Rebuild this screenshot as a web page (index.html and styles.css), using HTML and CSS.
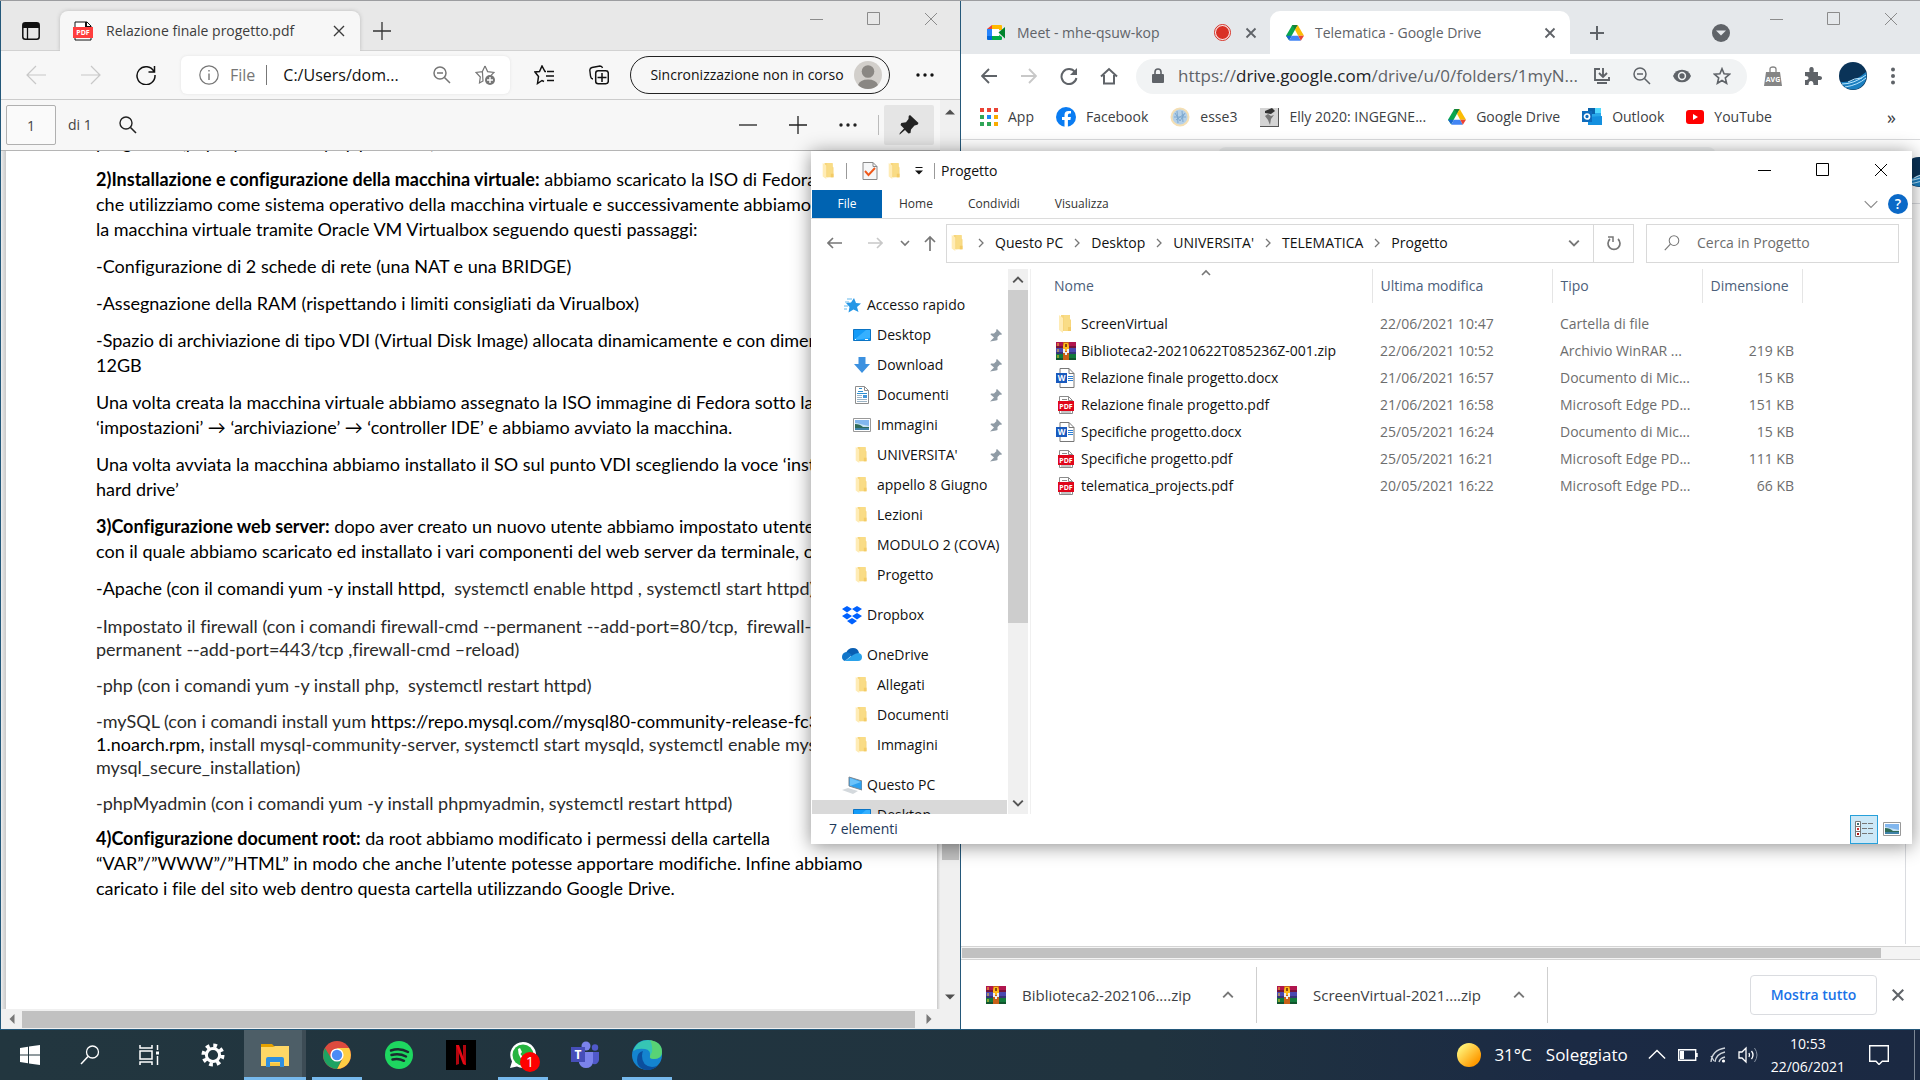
FILE: index.html
```html
<!DOCTYPE html>
<html lang="it">
<head>
<meta charset="utf-8">
<title>Desktop</title>
<link rel="stylesheet" href="styles.css">
</head>
<body>
<svg class="defs" aria-hidden="true">
  <symbol id="folder" viewBox="0 0 20 20"><path d="M5 1h9v4l1 1v11H5z" fill="#f7d67c"/><path d="M8 1h5l1 1v14l-6 1z" fill="#f9dc86"/><path d="M3 1l4 3v15l-4-3z" fill="#ffecb5"/><path d="M12 13h3v4h-3z" fill="#f3cb66"/></symbol>
  <symbol id="pdf" viewBox="0 0 20 20"><path d="M3.500 1.500h9l4 4v13h-13z" fill="#fff" stroke="#8b8b8b"/><path d="M12.500 1.500v4h4M6 4.500h5M15 17H5" fill="none" stroke="#8b8b8b"/><path d="M2 6h16v10H2z" fill="#e0061b"/><text x="10" y="14" text-anchor="middle" font-size="7" font-weight="700" fill="#fff">PDF</text></symbol>
  <symbol id="pdf-tab" viewBox="0 0 20 20"><path d="M2 1h12l4 4v14H2z" fill="#fff" stroke="#111"/><path d="M13 1v5h5" fill="none" stroke="#111" stroke-width="2"/><path d="M0 6h20v11H0z" fill="#ff3e3e"/><text x="10" y="14" text-anchor="middle" font-size="7" font-weight="700" fill="#fff">PDF</text></symbol>
  <symbol id="word" viewBox="0 0 20 20"><path d="M4 .5h9l5 5v14H4z" fill="#fff" stroke="#777"/><path d="M13 .5v5h5" fill="none" stroke="#777"/><path d="M12 8.500h5M12 10.500h5M12 12.500h5" stroke="#2b7cd3"/><path d="M0 5h11v10H0z" fill="#1859bd"/><text x="5.500" y="13" text-anchor="middle" font-size="8" font-weight="700" fill="#fff">W</text></symbol>
  <symbol id="rar" viewBox="0 0 20 20"><path d="M0 1h20v6H0z" fill="#b0154e"/><path d="M0 7h20v6H0z" fill="#4a49b0"/><path d="M0 13h20v6H0z" fill="#127a3c"/><path d="M0 5h20v2H0zM0 11h20v2H0zM0 17h20v2H0z" fill="#111" opacity=".35"/><path d="M2 2v3M2 8v3M2 14v3" stroke="#ffc928"/><path d="M7 1h6v18H7z" fill="#c86018"/><path d="M7 5l1-3h4l1 3v5H7z" fill="#ffb91c"/><path d="M9 3h2v3H9z" fill="#8a4a10"/><path d="M7 8h2v4H7zM11 8h2v4h-2zM9 11h2v3H9z" fill="#eee"/></symbol>
  <symbol id="pin" viewBox="0 0 14 14"><path d="M8 1l5 5-1 1-1-.5L8.500 9v3L7 12.500 1 13.500 1.500 13 5 9.500 1.500 6.500 2 5.500h3L7.500 3 7 2z" fill="#8f9ba5"/></symbol>
  <symbol id="desk" viewBox="0 0 18 18"><path d="M.5 3.500h17v11H.5z" fill="#139bf8" stroke="#0b74c4"/><path d="M1 14l12-10h4v8z" fill="#36b0ff"/><path d="M2 13.500h1M12 13.500h3" stroke="#fff"/></symbol>
  <symbol id="down" viewBox="0 0 18 18"><path d="M5.500 1h7v7H17l-8 9-8-9h4.500z" fill="#3c91e0"/></symbol>
  <symbol id="doc" viewBox="0 0 18 18"><path d="M2.500.5h9l4 4v13h-13z" fill="#fff" stroke="#8e8e8e"/><path d="M11.500.5v4h4" fill="none" stroke="#8e8e8e"/><path d="M6 2.500h3M5 5.500h5M4 7.500h10M10 9.500h4" stroke="#2e8fcf"/><path d="M4 9.500h5M4 11.500h5M4 13.500h10M4 15.500h10" stroke="#9bb3c4"/><path d="M10 9h4v3h-4z" fill="#4195d8"/></symbol>
  <symbol id="pic" viewBox="0 0 18 18"><path d="M.5 2.500h17v13H.5z" fill="#fff" stroke="#999"/><path d="M2 4h14v10H2z" fill="#82b7ee"/><path d="M2 7q3 0 5 1l9 2v4H2z" fill="#c7e2f4"/><path d="M2 8q5 0 8 3h6v1H2z" fill="#2f6b58"/><path d="M2 12h14v2H2z" fill="#3f82a8"/></symbol>
  <symbol id="quick" viewBox="0 0 20 20"><path d="M12 3l2 5 5 .5-4 3.500 1.500 5-5-2.500-5 3 1-5.500L4 8l5-.5z" fill="#2697e6"/><path d="M5 4h5M3 7h4M2 11h4M2 14h3" stroke="#67b9ec"/></symbol>
  <symbol id="dropbox" viewBox="0 0 20 20"><path d="M5 1l5 3-5 3.500L0 4zM15 1l5 3-5 3.500L10 4zM5 8l5 3-5 3.500L0 11zM15 8l5 3-5 3.500-5-3.500zM10 13l5 3-5 3.500L5 16z" fill="#0061fe"/></symbol>
  <symbol id="onedrive" viewBox="0 0 20 20"><path d="M4 8q2-5 7-5t6 5l-6 5z" fill="#0a5fb3"/><path d="M0 12q0-4 4-5 3 0 6 3l-7 6q-3-1-3-4z" fill="#1175c9"/><path d="M3 16l8-6q3-2 6-2 3 1 3 4 0 4-4 4z" fill="#2aa2ea"/></symbol>
  <symbol id="thispc" viewBox="0 0 20 20"><path d="M7 2l13 4v9L7 11z" fill="#2ea0ee" stroke="#7d8791"/><path d="M8 3l11 4-11 4z" fill="#6cc3fa"/><path d="M0 15l6-2 10 3-5 3z" fill="#d4d9dd"/></symbol>
  <symbol id="min" viewBox="0 0 14 14"><path d="M0 7.500h13" stroke="currentColor" fill="none"/></symbol>
  <symbol id="max" viewBox="0 0 14 14"><path d="M.5.5h12v12H.5z" stroke="currentColor" fill="none"/></symbol>
  <symbol id="x" viewBox="0 0 14 14"><path d="M1 1l12 12M13 1L1 13" stroke="currentColor" fill="none"/></symbol>
  <symbol id="xt" viewBox="0 0 12 12"><path d="M1 1l10 10M11 1L1 11" stroke="currentColor" stroke-width="1.400" fill="none"/></symbol>
  <symbol id="xb" viewBox="0 0 12 12"><path d="M1.500 1.500l9 9M10.500 1.500l-9 9" stroke="currentColor" stroke-width="1.800" fill="none"/></symbol>
  <symbol id="plus" viewBox="0 0 18 18"><path d="M9 0v18M0 9h18" stroke="currentColor" fill="none" stroke-width="1.300"/></symbol>
  <symbol id="plusb" viewBox="0 0 16 16"><path d="M8 1v14M1 8h14" stroke="currentColor" fill="none" stroke-width="2"/></symbol>
  <symbol id="minus" viewBox="0 0 18 18"><path d="M0 9h18" stroke="currentColor" fill="none" stroke-width="1.300"/></symbol>
  <symbol id="back" viewBox="0 0 20 20"><path d="M10 1L1 10l9 9M1 10h19" stroke="currentColor" fill="none" stroke-width="1.200"/></symbol>
  <symbol id="fwd" viewBox="0 0 20 20"><path d="M10 1l9 9-9 9M19 10H0" stroke="currentColor" fill="none" stroke-width="1.200"/></symbol>
  <symbol id="backb" viewBox="0 0 16 16"><path d="M8 1L1 8l7 7M1 8h15" stroke="currentColor" fill="none" stroke-width="1.900"/></symbol>
  <symbol id="fwdb" viewBox="0 0 16 16"><path d="M8 1l7 7-7 7M15 8H0" stroke="currentColor" fill="none" stroke-width="1.900"/></symbol>
  <symbol id="arrl" viewBox="0 0 16 16"><path d="M6 3L1 8l5 5M1 8h14" stroke="currentColor" fill="none" stroke-width="1.600"/></symbol>
  <symbol id="arrr" viewBox="0 0 16 16"><path d="M10 3l5 5-5 5M15 8H1" stroke="currentColor" fill="none" stroke-width="1.600"/></symbol>
  <symbol id="arru" viewBox="0 0 16 16"><path d="M3 7l5-5 5 5M8 2v14" stroke="currentColor" fill="none" stroke-width="1.700"/></symbol>
  <symbol id="chev" viewBox="0 0 10 10"><path d="M1 3l4 4 4-4" stroke="currentColor" fill="none" stroke-width="1.600"/></symbol>
  <symbol id="chevu" viewBox="0 0 10 10"><path d="M1 7l4-4 4 4" stroke="currentColor" fill="none" stroke-width="1.600"/></symbol>
  <symbol id="chevthin" viewBox="0 0 10 10"><path d="M.5 3l4.500 4.500L9.500 3" stroke="currentColor" fill="none" stroke-width=".8"/></symbol>
  <symbol id="chevr" viewBox="0 0 10 10"><path d="M3 1l4 4-4 4" stroke="currentColor" fill="none" stroke-width="1.300"/></symbol>
  <symbol id="tri" viewBox="0 0 10 10"><path d="M0 7.500l5-5 5 5z" fill="currentColor"/></symbol>
  <symbol id="qat" viewBox="0 0 10 10"><path d="M1.500 1.500h7" stroke="currentColor"/><path d="M1 4.500h8l-4 4z" fill="currentColor"/></symbol>
  <symbol id="reload" viewBox="0 0 20 20"><path d="M18 6.500A9 9 0 1 0 19 10M18.500 1v6h-6" stroke="currentColor" fill="none" stroke-width="1.500"/></symbol>
  <symbol id="reloadb" viewBox="0 0 18 18"><path d="M15 5a7.500 7.500 0 1 0 1.400 6" stroke="currentColor" fill="none" stroke-width="2"/><path d="M17 1v7h-7z" fill="currentColor"/></symbol>
  <symbol id="refresh" viewBox="0 0 16 16"><path d="M12 4a6 6 0 1 1-8 0" stroke="currentColor" fill="none" stroke-width="1.700"/><path d="M2 2h5v5" stroke="currentColor" fill="none" stroke-width="1.500"/></symbol>
  <symbol id="info" viewBox="0 0 20 20"><circle cx="10" cy="10" r="9.200" stroke="currentColor" fill="none" stroke-width="1.200"/><path d="M10 8.500V15M10 5v1.600" stroke="currentColor" stroke-width="1.400"/></symbol>
  <symbol id="zoomout" viewBox="0 0 18 18"><circle cx="7" cy="7" r="6" stroke="currentColor" fill="none" stroke-width="1.500"/><path d="M4 7h6M11.500 11.500L17 17" stroke="currentColor" fill="none" stroke-width="1.500"/></symbol>
  <symbol id="search" viewBox="0 0 18 18"><circle cx="7" cy="7" r="6" stroke="currentColor" fill="none" stroke-width="1.400"/><path d="M11.500 11.500L17 17" stroke="currentColor" stroke-width="1.600"/></symbol>
  <symbol id="lens" viewBox="0 0 20 20"><circle cx="12.500" cy="7" r="6" stroke="currentColor" fill="none" stroke-width="1.300"/><path d="M8 11.500L1 19" stroke="currentColor" stroke-width="1.500"/></symbol>
  <symbol id="staradd" viewBox="0 0 20 20"><path d="M10 1l2.600 5.600 6.400.8-3 3M8 16l-3.500 2 .8-6L1 7.400l6.400-.8z M10 1L7.400 6.600" stroke="currentColor" fill="none" stroke-width="1.200"/><circle cx="15" cy="15" r="5" fill="currentColor"/><path d="M15 12v6M12 15h6" stroke="#fff" stroke-width="1.400"/></symbol>
  <symbol id="fav" viewBox="0 0 20 20"><path d="M12 6.500h-1L8 1 5.500 6.500 1 7l3.500 4.500-1 7L8 15.500l2 1M13 6.500h7M12 11h8M13 15.500h7" stroke="currentColor" fill="none" stroke-width="1.500"/></symbol>
  <symbol id="coll" viewBox="0 0 20 20"><path d="M4 14Q2 14 1.500 11L.8 5Q1 3 3 2.500l8-1.500q2 0 2.500 2" stroke="currentColor" fill="none" stroke-width="1.400"/><rect x="6.700" y="5.700" width="12.600" height="13" rx="2.500" stroke="currentColor" fill="none" stroke-width="1.500"/><path d="M13 8v9M8.500 12.500h9" stroke="currentColor" stroke-width="1.500"/></symbol>
  <symbol id="dots" viewBox="0 0 18 6"><circle cx="2" cy="3" r="1.700" fill="currentColor"/><circle cx="9" cy="3" r="1.700" fill="currentColor"/><circle cx="16" cy="3" r="1.700" fill="currentColor"/></symbol>
  <symbol id="vdots" viewBox="0 0 6 18"><circle cx="3" cy="2.500" r="2" fill="currentColor"/><circle cx="3" cy="9" r="2" fill="currentColor"/><circle cx="3" cy="15.500" r="2" fill="currentColor"/></symbol>
  <symbol id="user" viewBox="0 0 28 28"><circle cx="14" cy="14" r="14" fill="#d2cfcb"/><circle cx="14" cy="10.500" r="6.300" fill="#8a8783"/><path d="M4 24q2-5.500 10-5.500T24 24q-4 4-10 4T4 24z" fill="#8a8783"/></symbol>
  <symbol id="bigpin" viewBox="0 0 20 20"><path d="M11 0l8.500 8-1 1.800-3 .7-3.500 4-.5 3.500-2 .5L6 15l-5.500 4.800L.8 18 5 13.500 1.500 10l.8-2L7 7.300 9.500 4 9.700 1z" fill="currentColor"/></symbol>
  <symbol id="meet" viewBox="0 0 20 20"><path d="M1 6l5-4v4z" fill="#ea4335"/><path d="M6 2h9q1 0 1 1v4h-3V6H6z" fill="#ffba00"/><path d="M1 6h5v7H1z" fill="#2684fc"/><path d="M1 13h5v4H2q-1 0-1-1z" fill="#0066da"/><path d="M6 13h7v-1l3 2v2q0 1-1 1H6z" fill="#00ac47"/><path d="M6 6h7v7H6z" fill="#fff"/><path d="M12.500 9.500L19 4v11.500z" fill="#00832d"/></symbol>
  <symbol id="drive" viewBox="0 0 20 18"><path d="M7 0h6L10 5.500 3.500 17 0 12z" fill="#0aa54e"/><path d="M7 0h6l-3 5.500z" fill="#188038"/><path d="M13 0l7 12h-6.500L10 5.500z" fill="#fbbc04"/><path d="M0 12h6.500L3.500 17z" fill="#1967d2"/><path d="M6.500 12h7l3 5.500h-13z" fill="#4285f4"/><path d="M13.500 12H20l-3.500 5.500z" fill="#ea4335"/></symbol>
  <symbol id="home" viewBox="0 0 18 18"><path d="M1 9.500L9 2l8 7.500M4 8v8.500h10V8" stroke="currentColor" fill="none" stroke-width="2"/></symbol>
  <symbol id="lock" viewBox="0 0 12 16"><path d="M1 6h10q1 0 1 1v7q0 1-1 1H1q-1 0-1-1V7q0-1 1-1z" fill="currentColor"/><path d="M3 7V4q0-3 3-3t3 3v3" stroke="currentColor" fill="none" stroke-width="1.600"/></symbol>
  <symbol id="install" viewBox="0 0 18 18"><path d="M7 2H2v11h14v-3M10 1v8M6 6l4 4 4-4M4 16h10" stroke="currentColor" fill="none" stroke-width="1.900"/></symbol>
  <symbol id="eye" viewBox="0 0 20 14"><path d="M0 7Q3 0 10 0t10 7q-3 7-10 7T0 7z" fill="currentColor"/><circle cx="10" cy="7" r="3.800" fill="currentColor" stroke="#f1f3f4" stroke-width="1.700"/></symbol>
  <symbol id="star" viewBox="0 0 20 20"><path d="M10 2l2.300 5.600 6 .5-4.600 4 1.400 6L10 15l-5.100 3.100 1.400-6-4.600-4 6-.5z" stroke="currentColor" fill="none" stroke-width="1.800"/></symbol>
  <symbol id="avg" viewBox="0 0 18 20"><path d="M2 6h14l2 14H0z" fill="#858585"/><path d="M6 7V3q0-2 3-2t3 2v4" stroke="#858585" fill="none" stroke-width="1.300"/><text x="9" y="15.500" text-anchor="middle" font-size="7" font-weight="700" fill="#fff">AVG</text></symbol>
  <symbol id="puzzle" viewBox="0 0 18 18"><path d="M1 5h4.500Q4.500 0 7.500 0t2 5H14v4q4-.5 4 2t-4 2v5H9.500q0-4-2.500-4t-2.500 4H1v-5q3.500 0 3.500-2T1 9z" fill="currentColor"/></symbol>
  <symbol id="wave" viewBox="0 0 28 28"><circle cx="14" cy="14" r="14" fill="#0a3358"/><path d="M2 20Q15 21 27 10q2 9-5 15-8 5-16 0-3-2-4-5z" fill="#1b7fc0"/><path d="M3 22q12 0 24-9M6 25q13-2 21-9M9 20q6-4 14-4" stroke="#b9e6ff" fill="none"/></symbol>
  <symbol id="apps" viewBox="0 0 18 18"><path d="M0 0h4v4H0zM7 0h4v4H7zM14 0h4v4h-4z" fill="#ea4335"/><path d="M0 7h4v4H0zM0 14h4v4H0zM7 14h4v4H7z" fill="#2fa557"/><path d="M7 7h4v4H7z" fill="#1a86f8"/><path d="M14 7h4v4h-4zM14 14h4v4h-4z" fill="#f9ab00"/></symbol>
  <symbol id="fb" viewBox="0 0 20 20"><circle cx="10" cy="10" r="10" fill="#0a7cf2"/><path d="M8.500 20v-7H6v-3h2.500V8q0-4 4-4H15v2.500h-1.500q-1.600 0-1.600 1.700V10h3l-.5 3h-2.500v7z" fill="#fff"/></symbol>
  <symbol id="esse" viewBox="0 0 20 20"><circle cx="10" cy="10" r="8.500" fill="#b4d0e8" stroke="#f4dfb4" stroke-width="2"/><path d="M5 6l5 8 5-8M4 10h12M7 4l1 12M12 4l1 11M6 13l8-6" stroke="#7ea9d0" fill="none"/></symbol>
  <symbol id="elly" viewBox="0 0 20 20"><path d="M1 1h19v19H1z" fill="#d4d4d4"/><path d="M1 19.500h19M19.500 1v19" stroke="#555"/><path d="M6 4l7-3 3 3-4 3-6-1z" fill="#333"/><path d="M6 9l3-2 3 2 3-1-3 4-1 6-2-5z" fill="#777"/></symbol>
  <symbol id="outlook" viewBox="0 0 20 20"><path d="M6 1h13v17H6z" fill="#28a8ea"/><path d="M6 1h7v6H6z" fill="#0a64ad"/><path d="M13 1h6v5h-6z" fill="#50d9ff"/><path d="M6 10l14-1v9H6z" fill="#1490df"/><path d="M0 4h10v11H0z" fill="#0f6cbd"/><circle cx="5" cy="9.500" r="2.500" fill="none" stroke="#fff" stroke-width="1.700"/></symbol>
  <symbol id="yt" viewBox="0 0 18 14"><rect width="18" height="14" rx="3" fill="#f00"/><path d="M7 4l5 3-5 3z" fill="#fff"/></symbol>
  <symbol id="win" viewBox="0 0 20 20"><path d="M0 3l8-1.200V9.500H0zM9 1.600L20 0v9.500H9zM0 10.500h8v7.700L0 17zM9 10.500h11V20L9 18.400z" fill="#fff"/></symbol>
  <symbol id="taskview" viewBox="0 0 22 20"><path d="M1 0v3h12V0M1 6h12v8H1zM1 20v-3h12v3M18.500 0v5M18.500 11v9" stroke="#fff" fill="none" stroke-width="1.500"/><path d="M17 6.500h3v3h-3z" fill="#fff"/></symbol>
  <symbol id="gear" viewBox="0 0 24 24"><circle cx="12" cy="12" r="6.600" stroke="#fff" stroke-width="3" fill="none"/><circle cx="12" cy="12" r="9.500" stroke="#fff" stroke-width="4" stroke-dasharray="3.700 3.760" fill="none"/></symbol>
  <symbol id="explorer" viewBox="0 0 28 28"><path d="M0 3h11l3 3v6H0z" fill="#e5a100"/><path d="M0 6h12l2-1h14v20H0z" fill="#ffd766"/><path d="M5 26v-8q0-2 2-2h14q2 0 2 2v8h-4v-5H9v5z" fill="#2f8fe0"/><path d="M9 22h10v3H9z" fill="#f9c740"/></symbol>
  <symbol id="chrome" viewBox="0 0 28 28"><circle cx="14" cy="14" r="14" fill="#dd4b3e"/><path d="M14 28A14 14 0 0 0 26 7H14l6 10z" fill="#ffce44"/><path d="M14 28A14 14 0 0 1 2 7l6 10q6 6 11 1z" fill="#1da362"/><circle cx="14" cy="14" r="6.600" fill="#fff"/><circle cx="14" cy="14" r="5.200" fill="#4b8bf5"/></symbol>
  <symbol id="spotify" viewBox="0 0 28 28"><circle cx="14" cy="14" r="14" fill="#1ed760"/><path d="M6 9.500q9-3 17 1.500M6.500 14q8-2 14.500 1.500M7.500 18.500q6-1.500 11.500 1.300" stroke="#1b2b30" fill="none" stroke-width="2.500" stroke-linecap="round"/></symbol>
  <symbol id="netflix" viewBox="0 0 30 30"><path d="M0 0h30v30H0z" fill="#000"/><path d="M10 5h3v19l-3 1zM17 5h3v20l-3-1z" fill="#b1060f"/><path d="M10 5h3l7 20-3-1z" fill="#e50914"/></symbol>
  <symbol id="wa" viewBox="0 0 28 28"><path d="M14 1a13 13 0 1 1-6 24.500L1 27l2-6.500A13 13 0 0 1 14 1z" fill="#fff"/><circle cx="14" cy="14" r="10.500" fill="#26b43f"/><path d="M9 8l2-1 2 4-1.500 2q1.500 3 4.500 4l2-2 3.500 2q0 3-3 3.500Q9 19 9 8z" fill="#fff"/></symbol>
  <symbol id="teams" viewBox="0 0 28 28"><circle cx="15" cy="5" r="4.500" fill="#7b83eb"/><circle cx="24" cy="6.500" r="3.200" fill="#5059c9"/><path d="M17 11h11v8q-1 5-6 4l-5-3z" fill="#5059c9"/><path d="M8 11h14v10q-1 6-7 6-5 0-7-5z" fill="#7b83eb"/><path d="M0 6h14v15H0z" fill="#464eb8"/><text x="7" y="18" text-anchor="middle" font-size="12" font-weight="700" fill="#fff">T</text></symbol>
  <symbol id="edge" viewBox="0 0 30 30"><circle cx="15" cy="15" r="15" fill="#1484cf"/><path d="M1 11Q5 0 16 0q14 1 14 12 0 7-8 7-5 0-4-3 1-6-5-7Q5 8 1 11z" fill="#36c5b4"/><path d="M18 0q12 2 12 12 0 7-8 7-5 0-4-3l2-4q1-6-2-12z" fill="#66d85a" opacity=".7"/><path d="M10 16q0 10 10 11 5 0 8-4-6 8-14 7Q5 28 5 20q0-8 6-9-1 2-1 5z" fill="#0b4f9e"/></symbol>
  <symbol id="batt" viewBox="0 0 20 12"><path d="M.7.700h17v10.600H.7zM19 4v4" stroke="#fff" fill="none" stroke-width="1.400"/><path d="M2 2h4v8H2z" fill="#fff"/></symbol>
  <symbol id="wifi" viewBox="0 0 16 16"><path d="M1 15Q2 3 15 1M5 15Q6 7 15 5M9 15q1-4 6-5M1 9l3 5" stroke="#cfd5dc" fill="none" stroke-width="1.300"/><circle cx="13.500" cy="14" r="1.600" fill="#fff"/></symbol>
  <symbol id="sound" viewBox="0 0 20 16"><path d="M1 5h3l4-4v14l-4-4H1z" stroke="#fff" fill="none" stroke-width="1.300"/><path d="M11 6q1 2 0 4M13.500 4q3 4 0 8" stroke="#fff" fill="none" stroke-width="1.300"/><path d="M16.500 1q5 7 0 14" stroke="#8792a2" fill="none"/></symbol>
  <symbol id="note" viewBox="0 0 20 20"><path d="M.7.700h18.600v15.600h-6L10 19.500l-3-3.200H.7z" stroke="#fff" fill="none" stroke-width="1.400"/></symbol>
  <symbol id="vtabs" viewBox="0 0 18 18"><rect x=".8" y=".8" width="16.400" height="16.400" rx="2.500" fill="none" stroke="#111" stroke-width="1.500"/><path d="M1 1h16v5H1z" fill="#111"/><path d="M5.500 5v12" stroke="#111" stroke-width="1.300"/></symbol>
  <symbol id="check" viewBox="0 0 16 18"><path d="M1 .5h10l4 4v13H1z" fill="#f6f7f8" stroke="#8a8a8a"/><path d="M11 .5v4h4" fill="none" stroke="#8a8a8a"/><path d="M3 9l3.500 4L13 6" fill="none" stroke="#f0591a" stroke-width="1.900"/></symbol>
  <symbol id="details" viewBox="0 0 20 16"><path d="M1.500.500h5v15h-5zM1.500 5.500h5M1.500 10.500h5M8 2.500h5M14 2.500h5M8 7.500h5M14 7.500h5M8 12.500h5M14 12.500h5" stroke="#777" fill="#fff"/><path d="M3 2h2v2H3z" fill="#3c6e73"/><path d="M3 7h2v2H3z" fill="#c33"/><path d="M3 12h2v2H3z" fill="#a11"/></symbol>
</svg>

<main class="desktop">
  <section class="window edge" aria-label="Microsoft Edge">
    <header class="edge-tabs">
      <button class="vtabs" aria-label="Menu schede"><svg class="s18"><use href="#vtabs"/></svg></button>
      <div class="edge-tab"><svg class="s20"><use href="#pdf-tab"/></svg><span class="grow">Relazione finale progetto.pdf</span><button aria-label="Chiudi scheda"><svg class="s12"><use href="#xt"/></svg></button></div>
      <button class="edge-new" aria-label="Nuova scheda"><svg class="s18"><use href="#plus"/></svg></button>
      <div class="controls"><button aria-label="Riduci"><svg class="s14"><use href="#min"/></svg></button><button aria-label="Ingrandisci"><svg class="s14"><use href="#max"/></svg></button><button aria-label="Chiudi"><svg class="s14"><use href="#x"/></svg></button></div>
    </header>
    <nav class="edge-nav">
      <button class="w55 pale" aria-label="Indietro"><svg class="s20"><use href="#back"/></svg></button>
      <button class="w55 pale" aria-label="Avanti"><svg class="s20"><use href="#fwd"/></svg></button>
      <button class="w55" aria-label="Aggiorna"><svg class="s20"><use href="#reload"/></svg></button>
      <div class="edge-address"><svg class="s20 grey"><use href="#info"/></svg><span class="grey">File</span><i class="bar"></i><span class="grow">C:/Users/dom...</span><button class="grey" aria-label="Zoom"><svg class="s18"><use href="#zoomout"/></svg></button><button class="grey" aria-label="Aggiungi ai preferiti"><svg class="s20"><use href="#staradd"/></svg></button></div>
      <div class="edge-tools"><button class="w55" aria-label="Preferiti"><svg class="s20"><use href="#fav"/></svg></button><button class="w55" aria-label="Raccolte"><svg class="s20"><use href="#coll"/></svg></button></div>
      <button class="sync">Sincronizzazione non in corso<svg class="s28"><use href="#user"/></svg></button>
      <button class="w70" aria-label="Altro"><svg class="dots"><use href="#dots"/></svg></button>
    </nav>
    <div class="edge-body">
      <div class="viewer">
        <div class="pdf-bar">
          <input class="page-no" aria-label="Pagina" value="1"><span>di 1</span>
          <button class="pdf-find" aria-label="Trova"><svg class="s18"><use href="#search"/></svg></button>
          <div class="pdf-tools"><button class="w50" aria-label="Riduci zoom"><svg class="s18"><use href="#minus"/></svg></button><button class="w50" aria-label="Aumenta zoom"><svg class="s18"><use href="#plus"/></svg></button><button class="w50" aria-label="Altro"><svg class="dots"><use href="#dots"/></svg></button><i class="bar light"></i><button class="pinned" aria-label="Blocca barra"><svg class="s20"><use href="#bigpin"/></svg></button></div>
        </div>
        <div class="paper-wrap">
          <article class="paper">
            <p class="cut">programmi(phpMyadmin e mysql per il sito)</p>
            <p><b>2)Installazione e configurazione della macchina virtuale:</b> abbiamo scaricato la ISO di Fedora34<br>che utilizziamo come sistema operativo della macchina virtuale e successivamente abbiamo creato<br>la macchina virtuale tramite Oracle VM Virtualbox seguendo questi passaggi:</p>
            <p>-Configurazione di 2 schede di rete (una NAT e una BRIDGE)</p>
            <p>-Assegnazione della RAM (rispettando i limiti consigliati da Virualbox)</p>
            <p>-Spazio di archiviazione di tipo VDI (Virtual Disk Image) allocata dinamicamente e con dimensione<br>12GB</p>
            <p>Una volta creata la macchina virtuale abbiamo assegnato la ISO immagine di Fedora sotto la voce<br>‘impostazioni’ → ‘archiviazione’ → ‘controller IDE’ e abbiamo avviato la macchina.</p>
            <p>Una volta avviata la macchina abbiamo installato il SO sul punto VDI scegliendo la voce ‘install<br>hard drive’</p>
            <p><b>3)Configurazione web server:</b> dopo aver creato un nuovo utente abbiamo impostato utente ‘root’<br>con il quale abbiamo scaricato ed installato i vari componenti del web server da terminale, ovvero</p>
            <p>-Apache (con il comandi yum -y install httpd,&nbsp; <span class="soft">systemctl enable httpd , systemctl start httpd)</span></p>
            <div class="cmds">
              <p>-Impostato il firewall (con i comandi firewall-cmd --permanent --add-port=80/tcp,&nbsp; firewall-cmd<br>permanent --add-port=443/tcp ,firewall-cmd –reload)</p>
              <p>-php (con i comandi yum -y install php,&nbsp; systemctl restart httpd)</p>
              <p>-mySQL (con i comandi install yum <span class="ink">https://repo.mysql.com//mysql80-community-release-fc34<br>1.noarch.rpm,</span> install mysql-community-server, systemctl start mysqld, systemctl enable mysqld<br>mysql_secure_installation)</p>
              <p>-phpMyadmin (con i comandi yum -y install phpmyadmin, systemctl restart httpd)</p>
            </div>
            <p><b>4)Configurazione document root:</b> da root abbiamo modificato i permessi della cartella<br>“VAR”/”WWW”/”HTML” in modo che anche l’utente potesse apportare modifiche. Infine abbiamo<br>caricato i file del sito web dentro questa cartella utilizzando Google Drive.</p>
          </article>
        </div>
      </div>
      <div class="vscroll"><svg class="s10"><use href="#tri"/></svg><i class="vthumb"></i><svg class="s10 flip"><use href="#tri"/></svg></div>
    </div>
    <div class="hscroll"><svg class="s10 left"><use href="#tri"/></svg><i class="hthumb"></i><svg class="s10 right"><use href="#tri"/></svg></div>
  </section>

  <section class="window chrome" aria-label="Google Chrome">
    <header class="ch-tabs">
      <div class="ch-tab"><svg class="s20"><use href="#meet"/></svg><span class="grow">Meet - mhe-qsuw-kop</span><i class="rec"></i><button aria-label="Chiudi scheda"><svg class="s12"><use href="#xb"/></svg></button></div>
      <div class="ch-tab active"><svg class="s18"><use href="#drive"/></svg><span class="grow">Telematica - Google Drive</span><button aria-label="Chiudi scheda"><svg class="s12"><use href="#xb"/></svg></button></div>
      <button class="ch-new" aria-label="Nuova scheda"><svg class="s16"><use href="#plusb"/></svg></button>
      <button class="tab-menu" aria-label="Cerca schede"><svg class="s10 flip"><use href="#tri"/></svg></button>
      <div class="controls"><button aria-label="Riduci"><svg class="s14"><use href="#min"/></svg></button><button aria-label="Ingrandisci"><svg class="s14"><use href="#max"/></svg></button><button aria-label="Chiudi"><svg class="s14"><use href="#x"/></svg></button></div>
    </header>
    <nav class="ch-nav">
      <button class="w40" aria-label="Indietro"><svg class="s16"><use href="#backb"/></svg></button>
      <button class="w40 pale" aria-label="Avanti"><svg class="s16"><use href="#fwdb"/></svg></button>
      <button class="w40" aria-label="Ricarica"><svg class="s18"><use href="#reloadb"/></svg></button>
      <button class="w40" aria-label="Home"><svg class="s18"><use href="#home"/></svg></button>
      <div class="omnibox"><svg class="lock"><use href="#lock"/></svg><span class="grow url">https://<span class="host">drive.google.com</span>/drive/u/0/folders/1myN...</span><button class="w40" aria-label="Installa"><svg class="s18"><use href="#install"/></svg></button><button class="w40" aria-label="Zoom"><svg class="s18"><use href="#zoomout"/></svg></button><button class="w40" aria-label="Cookie"><svg class="s18"><use href="#eye"/></svg></button><button class="w40" aria-label="Preferiti"><svg class="s18"><use href="#star"/></svg></button></div>
      <button class="w40" aria-label="AVG"><svg class="s20"><use href="#avg"/></svg></button>
      <button class="w40" aria-label="Estensioni"><svg class="s18"><use href="#puzzle"/></svg></button>
      <button class="w40" aria-label="Profilo"><svg class="s28"><use href="#wave"/></svg></button>
      <button class="w40" aria-label="Menu"><svg class="s18"><use href="#vdots"/></svg></button>
    </nav>
    <div class="bookmarks">
      <a href="#"><svg class="s18"><use href="#apps"/></svg>App</a>
      <a href="#"><svg class="s20"><use href="#fb"/></svg>Facebook</a>
      <a href="#"><svg class="s20"><use href="#esse"/></svg>esse3</a>
      <a href="#"><svg class="s20"><use href="#elly"/></svg>Elly 2020: INGEGNE...</a>
      <a href="#"><svg class="s18"><use href="#drive"/></svg>Google Drive</a>
      <a href="#"><svg class="s20"><use href="#outlook"/></svg>Outlook</a>
      <a href="#"><svg class="s18"><use href="#yt"/></svg>YouTube</a>
      <button class="more" aria-label="Altri preferiti">»</button>
    </div>
    <div class="drive-page"><div class="drive-head"><div class="drive-search"></div><svg class="s28 me"><use href="#wave"/></svg></div><div class="drive-main"></div></div>
    <div class="ch-scroll"><i></i></div>
    <footer class="downloads">
      <div class="dl"><svg class="s20"><use href="#rar"/></svg><span class="grow">Biblioteca2-202106....zip</span><button aria-label="Opzioni"><svg class="s12"><use href="#chevu"/></svg></button></div>
      <div class="dl"><svg class="s20"><use href="#rar"/></svg><span class="grow">ScreenVirtual-2021....zip</span><button aria-label="Opzioni"><svg class="s12"><use href="#chevu"/></svg></button></div>
      <button class="show-all">Mostra tutto</button><button class="dl-close" aria-label="Chiudi"><svg class="s14"><use href="#xb"/></svg></button>
    </footer>
  </section>

  <section class="explorer" aria-label="Esplora file">
    <header class="ex-title">
      <svg class="s18"><use href="#folder"/></svg><i class="bar thin"></i><svg class="s18"><use href="#check"/></svg><svg class="s18"><use href="#folder"/></svg><button class="qat" aria-label="Personalizza"><svg class="s10"><use href="#qat"/></svg></button><i class="bar thin"></i><h1>Progetto</h1>
      <div class="controls dark"><button aria-label="Riduci"><svg class="s14"><use href="#min"/></svg></button><button aria-label="Ingrandisci"><svg class="s14"><use href="#max"/></svg></button><button aria-label="Chiudi"><svg class="s14"><use href="#x"/></svg></button></div>
    </header>
    <div class="ribbon"><button class="file">File</button><button>Home</button><button>Condividi</button><button>Visualizza</button><button class="expand" aria-label="Espandi"><svg class="s14"><use href="#chevthin"/></svg></button><button class="help" aria-label="Guida">?</button></div>
    <nav class="ex-nav">
      <button class="w40" aria-label="Indietro"><svg class="s16"><use href="#arrl"/></svg></button>
      <button class="w40 pale" aria-label="Avanti"><svg class="s16"><use href="#arrr"/></svg></button>
      <button class="w20" aria-label="Recenti"><svg class="s10"><use href="#chev"/></svg></button>
      <button class="w30" aria-label="Su"><svg class="s16"><use href="#arru"/></svg></button>
      <div class="crumbs"><svg class="s18"><use href="#folder"/></svg><svg class="s10"><use href="#chevr"/></svg><a href="#">Questo PC</a><svg class="s10"><use href="#chevr"/></svg><a href="#">Desktop</a><svg class="s10"><use href="#chevr"/></svg><a href="#">UNIVERSITA'</a><svg class="s10"><use href="#chevr"/></svg><a href="#">TELEMATICA</a><svg class="s10"><use href="#chevr"/></svg><a href="#">Progetto</a><button class="hist" aria-label="Cronologia"><svg class="s12"><use href="#chev"/></svg></button><button class="redo" aria-label="Aggiorna"><svg class="s16"><use href="#refresh"/></svg></button></div>
      <label class="ex-search"><svg class="s16"><use href="#lens"/></svg><input type="text" aria-label="Cerca" placeholder="Cerca in Progetto"></label>
    </nav>
    <div class="ex-body">
      <div class="tree">
        <a class="top" href="#"><svg class="s20"><use href="#quick"/></svg>Accesso rapido</a>
        <a href="#"><svg class="s18"><use href="#desk"/></svg>Desktop<svg class="s14 pin"><use href="#pin"/></svg></a>
        <a href="#"><svg class="s18"><use href="#down"/></svg>Download<svg class="s14 pin"><use href="#pin"/></svg></a>
        <a href="#"><svg class="s18"><use href="#doc"/></svg>Documenti<svg class="s14 pin"><use href="#pin"/></svg></a>
        <a href="#"><svg class="s18"><use href="#pic"/></svg>Immagini<svg class="s14 pin"><use href="#pin"/></svg></a>
        <a href="#"><svg class="s18"><use href="#folder"/></svg>UNIVERSITA'<svg class="s14 pin"><use href="#pin"/></svg></a>
        <a href="#"><svg class="s18"><use href="#folder"/></svg>appello 8 Giugno</a>
        <a href="#"><svg class="s18"><use href="#folder"/></svg>Lezioni</a>
        <a href="#"><svg class="s18"><use href="#folder"/></svg>MODULO 2 (COVA)</a>
        <a href="#"><svg class="s18"><use href="#folder"/></svg>Progetto</a>
        <a class="top" href="#"><svg class="s20"><use href="#dropbox"/></svg>Dropbox</a>
        <a class="top" href="#"><svg class="s20"><use href="#onedrive"/></svg>OneDrive</a>
        <a href="#"><svg class="s18"><use href="#folder"/></svg>Allegati</a>
        <a href="#"><svg class="s18"><use href="#folder"/></svg>Documenti</a>
        <a href="#"><svg class="s18"><use href="#folder"/></svg>Immagini</a>
        <a class="top" href="#"><svg class="s20"><use href="#thispc"/></svg>Questo PC</a>
        <a class="selected" href="#"><svg class="s18"><use href="#desk"/></svg>Desktop</a>
      </div>
      <div class="tree-scroll"><svg class="s12"><use href="#chevu"/></svg><i></i><svg class="s12"><use href="#chev"/></svg></div>
      <div class="files">
        <table>
          <colgroup><col class="c-name"><col class="c-date"><col class="c-type"><col class="c-size"><col></colgroup>
          <thead><tr><th>Nome<svg class="sort"><use href="#chevu"/></svg></th><th>Ultima modifica</th><th>Tipo</th><th>Dimensione</th><td></td></tr></thead>
          <tbody>
            <tr><td><svg class="s20"><use href="#folder"/></svg>ScreenVirtual</td><td>22/06/2021 10:47</td><td>Cartella di file</td><td></td><td></td></tr>
            <tr><td><svg class="s20"><use href="#rar"/></svg>Biblioteca2-20210622T085236Z-001.zip</td><td>22/06/2021 10:52</td><td>Archivio WinRAR ...</td><td>219 KB</td><td></td></tr>
            <tr><td><svg class="s20"><use href="#word"/></svg>Relazione finale progetto.docx</td><td>21/06/2021 16:57</td><td>Documento di Mic...</td><td>15 KB</td><td></td></tr>
            <tr><td><svg class="s20"><use href="#pdf"/></svg>Relazione finale progetto.pdf</td><td>21/06/2021 16:58</td><td>Microsoft Edge PD...</td><td>151 KB</td><td></td></tr>
            <tr><td><svg class="s20"><use href="#word"/></svg>Specifiche progetto.docx</td><td>25/05/2021 16:24</td><td>Documento di Mic...</td><td>15 KB</td><td></td></tr>
            <tr><td><svg class="s20"><use href="#pdf"/></svg>Specifiche progetto.pdf</td><td>25/05/2021 16:21</td><td>Microsoft Edge PD...</td><td>111 KB</td><td></td></tr>
            <tr><td><svg class="s20"><use href="#pdf"/></svg>telematica_projects.pdf</td><td>20/05/2021 16:22</td><td>Microsoft Edge PD...</td><td>66 KB</td><td></td></tr>
          </tbody>
        </table>
      </div>
    </div>
    <footer class="ex-status"><span>7 elementi</span><button class="view on" aria-label="Dettagli"><svg class="s20"><use href="#details"/></svg></button><button class="view" aria-label="Anteprime"><svg class="s18"><use href="#pic"/></svg></button></footer>
  </section>
</main>

<footer class="taskbar">
  <div class="launch">
    <button aria-label="Start"><svg class="s20"><use href="#win"/></svg></button>
    <button aria-label="Cerca"><svg class="s20 white"><use href="#lens"/></svg></button>
    <button aria-label="Visualizzazione attività"><svg class="s22"><use href="#taskview"/></svg></button>
  </div>
  <div class="running">
    <button aria-label="Impostazioni"><svg class="s24"><use href="#gear"/></svg></button>
    <button class="open front" aria-label="Esplora file"><svg class="s28"><use href="#explorer"/></svg></button>
    <button class="open" aria-label="Chrome"><svg class="s28"><use href="#chrome"/></svg></button>
    <button aria-label="Spotify"><svg class="s28"><use href="#spotify"/></svg></button>
    <button aria-label="Netflix"><svg class="s30"><use href="#netflix"/></svg></button>
    <button class="open" aria-label="WhatsApp"><svg class="s28"><use href="#wa"/></svg><span class="badge">1</span></button>
    <button aria-label="Teams"><svg class="s28"><use href="#teams"/></svg></button>
    <button class="open" aria-label="Edge"><svg class="s30"><use href="#edge"/></svg></button>
  </div>
  <div class="tray">
    <i class="sun"></i><span class="weather">31°C</span><span class="weather">Soleggiato</span>
    <div class="icons"><svg class="s18 white flip"><use href="#chevthin"/></svg><svg class="s20"><use href="#batt"/></svg><svg class="s16"><use href="#wifi"/></svg><svg class="s20"><use href="#sound"/></svg></div>
    <div class="clock"><time>10:53</time><time>22/06/2021</time></div>
    <button class="notes" aria-label="Notifiche"><svg class="s20"><use href="#note"/></svg></button>
  </div>
</footer>
</body>
</html>
```
FILE: styles.css
```css
* { box-sizing: border-box; }
body { margin: 0; height: 100vh; display: flex; flex-direction: column; overflow: hidden; font: 14px/20px "Open Sans", "Noto Sans", sans-serif; color: #111; background: #1f3040; }
button { border: 0; padding: 0; margin: 0; background: none; font: inherit; color: inherit; display: flex; align-items: center; justify-content: center; flex: none; }
input { font: inherit; color: inherit; outline: 0; }
a { color: inherit; text-decoration: none; }
svg, i { flex: none; display: block; }
.defs { display: none; }
.s10 { width: 10px; height: 10px; }
.s12 { width: 12px; height: 12px; }
.s14 { width: 14px; height: 14px; }
.s16 { width: 16px; height: 16px; }
.s18 { width: 18px; height: 18px; }
.s20 { width: 20px; height: 20px; }
.s22 { width: 22px; height: 20px; }
.s24 { width: 24px; height: 24px; }
.s28 { width: 28px; height: 28px; }
.s30 { width: 30px; height: 30px; }
.dots { width: 18px; height: 6px; }
.lock { width: 12px; height: 16px; }
.w20 { width: 20px; } .w30 { width: 30px; } .w40 { width: 40px; } .w50 { width: 50px; } .w55 { width: 55px; } .w70 { width: 70px; }
.flip { transform: rotate(180deg); }
.left { transform: rotate(-90deg); }
.right { transform: rotate(90deg); }
.grow { flex: 1; min-width: 0; white-space: nowrap; }
.grey { color: #767676; }
.white { color: #fff; }
.pale { color: #c8c8c8; }
.bar { width: 1px; height: 20px; background: #777; }

.desktop { flex: 1; min-height: 0; position: relative; display: flex; border-top: 1px solid #9c9da0; }
.window { flex: 1 1 0; min-width: 0; display: flex; flex-direction: column; border-left: 1px solid #24587a; border-bottom: 1px solid #24587a; background: #fff; }
.controls { display: flex; margin-left: auto; align-self: flex-start; padding-right: 1px; color: #8b8b8b; }
.controls button { width: 57px; height: 36px; }

/* Edge */
.edge { background: #f7f7f7; }
.edge-tabs { display: flex; height: 50px; background: #e8e8e8; border-bottom: 1px solid #d2d2d2; }
.vtabs { width: 59px; padding-top: 11px; }
.edge-tab { display: flex; align-items: center; width: 300px; margin-top: 10px; height: 40px; background: #f7f7f7; border-radius: 8px 8px 0 0; padding: 0 15px 0 13px; gap: 13px; color: #3c3c3c; box-shadow: 0 0 4px #bbb; clip-path: inset(-4px -4px 0 -4px); }
.edge-new { width: 43px; padding-top: 10px; color: #333; }
.edge-nav { display: flex; align-items: center; height: 49px; padding-left: 7px; border-bottom: 1px solid #ccc; color: #111; }
.edge-address { display: flex; align-items: center; gap: 11px; width: 329px; height: 38px; background: #fff; border-radius: 6px; margin-left: 8px; padding: 0 9px 0 18px; font-size: 16px; box-shadow: 0 0 3px #e2e2e2; }
.edge-address .grow { padding-left: 5px; }
.edge-address button { width: 32px; }
.edge-tools { display: flex; margin-left: auto; }
.sync { width: 260px; height: 38px; border: 1px solid #222; border-radius: 19px; gap: 10px; margin-left: 4px; padding-left: 12px; }
.edge-body { flex: 1; min-height: 0; display: flex; }
.viewer { flex: 1; min-width: 0; display: flex; flex-direction: column; }
.pdf-bar { display: flex; align-items: center; height: 51px; padding: 0 6px 0 5px; border-bottom: 1px solid #b5b5b5; color: #444; }
.page-no { width: 50px; height: 40px; border: 1px solid #b0b0b0; border-radius: 2px; background: #fafafa; text-align: center; padding: 0; margin-right: 12px; }
.pdf-find { margin-left: 27px; color: #222; }
.pdf-tools { display: flex; align-items: center; margin-left: auto; color: #222; }
.bar.light { background: #bbb; margin: 0 5px; }
.pinned { width: 50px; height: 40px; background: #e5e5e5; border-radius: 2px; }
.paper-wrap { flex: 1; min-height: 0; overflow: hidden; padding: 0 3px 0 5px; background: linear-gradient(90deg, #eee, #c8c8c8 5px, #c8c8c8 calc(100% - 3px), #eee); }
.paper { min-height: 100%; background: #fff; padding: 0 0 0 90px; font: 18px/25px Lato, "Open Sans", sans-serif; font-variant-ligatures: none; color: #000; white-space: nowrap; overflow: hidden; }
.paper p { margin: 0 0 12px; }
.paper .cut { margin-top: -21px; }
.cmds { display: flex; flex-direction: column; gap: 13px; margin: 14px 0 11px; line-height: 23px; color: #2b2b2b; }
.paper .cmds p { margin: 0; }
.soft { color: #2b2b2b; }
.ink { color: #000; }
.vscroll { width: 20px; background: #f0f0f0; display: flex; flex-direction: column; align-items: center; padding: 7px 0; color: #505050; }
.vthumb { width: 17px; flex: 1; margin: 50px 0 132px; background: #c1c1c1; }
.hscroll { height: 20px; background: #f0f0f0; display: flex; align-items: center; padding: 0 26px 0 6px; color: #777; }
.hthumb { flex: 1; height: 17px; background: #c1c1c1; margin: 0 9px 0 5px; }

/* Chrome */
.ch-tabs { display: flex; height: 53px; background: #e5e8eb; color: #5f6368; }
.ch-tab { display: flex; align-items: center; height: 43px; margin-top: 10px; gap: 11px; width: 309px; padding: 0 13px 0 25px; }
.ch-tab.active { width: 300px; padding: 0 14px 0 16px; background: #fff; border-radius: 10px 10px 0 0; }
.rec { width: 15px; height: 15px; border-radius: 50%; background: #d93025; border: 1px solid #fff; outline: 1px solid #d93025; margin-right: 4px; }
.ch-new { width: 54px; padding-top: 10px; }
.tab-menu { width: 18px; height: 18px; border-radius: 50%; background: #5f6368; color: #e5e8eb; margin: 23px 0 0 auto; }
.chrome .controls { margin-left: 18px; }
.ch-nav { display: flex; align-items: center; height: 44px; padding: 0 7px 0 8px; color: #5f6368; }
.omnibox { flex: 1; min-width: 0; display: flex; align-items: center; height: 35px; border-radius: 18px; background: #f1f3f4; margin: 0 6px 0 7px; padding: 0 5px 0 16px; font-size: 17px; }
.url { padding-left: 14px; }
.host { color: #202124; }
.bookmarks { display: flex; align-items: center; height: 42px; padding: 0 24px 4px 19px; gap: 22px; border-bottom: 1px solid #d9dadc; color: #3c4043; }
.bookmarks a { display: flex; align-items: center; gap: 10px; white-space: nowrap; }
.more { margin-left: auto; font-size: 18px; }
.drive-page { flex: 1; min-height: 0; display: flex; flex-direction: column; }
.drive-head { height: 64px; border-bottom: 1px solid #dadce0; padding: 7px 0 0 257px; display: flex; justify-content: space-between; overflow: hidden; }
.drive-search { width: 498px; height: 48px; border-radius: 8px; background: #f1f3f4; }
.me { margin-top: 10px; margin-right: -14px; width: 30px; height: 30px; }
.drive-main { flex: 1; border-right: 1px solid #dadce0; margin: 0 14px 2px 0; }
.ch-scroll { height: 14px; background: #f4f4f4; border-top: 1px solid #d4d4d4; border-bottom: 1px solid #d4d4d4; padding: 1px 39px 1px 1px; }
.ch-scroll i { height: 10px; background: #c1c1c1; }
.downloads { display: flex; align-items: center; height: 69px; padding-right: 15px; color: #3c4043; }
.dl { display: flex; align-items: center; width: 291px; height: 56px; border-right: 1px solid #cfcfcf; padding: 0 22px 0 20px; gap: 16px; font-size: 15px; }
.dl:first-child { width: 296px; padding-left: 25px; }
.dl button { color: #777; }
.show-all { margin-left: auto; width: 127px; height: 40px; border: 1px solid #dadce0; border-radius: 4px; color: #1a73e8; font-weight: 600; }
.dl-close { margin-left: 14px; color: #5f6368; }

/* File Explorer: a floating window over the desktop */
.explorer { position: absolute; top: 150px; right: 8px; bottom: 186px; left: 811px; display: flex; flex-direction: column; background: #fff; box-shadow: 0 2px 18px rgba(0, 0, 0, .45); }
.ex-title { display: flex; align-items: center; height: 39px; padding-left: 9px; }
.ex-title h1 { font-size: 14px; font-weight: 400; margin: 0 0 0 6px; }
.thin { background: #999; height: 16px; }
.ex-title svg + .thin { margin: 0 14px 0 8px; }
.ex-title svg + svg { margin-left: 7px; }
.qat { width: 30px; color: #111; }
.controls.dark { color: #000; padding-right: 2px; }
.controls.dark button { width: 58px; height: 38px; }
.ribbon { display: flex; height: 29px; border-bottom: 1px solid #dcdcdc; padding: 0 4px 0 1px; font-size: 12px; color: #333; gap: 35px; }
.ribbon .file { width: 70px; background: #0063b1; color: #fff; margin-right: -18px; }
.ribbon .expand { margin-left: auto; color: #888; }
.ribbon .help { width: 20px; height: 20px; border-radius: 50%; background: #0b69c7; color: #fff; font-size: 14px; font-weight: 600; align-self: center; margin-left: -25px; }
.ex-nav { display: flex; align-items: center; height: 50px; padding: 0 13px 2px 4px; color: #777; }
.crumbs { flex: 1; min-width: 0; height: 39px; display: flex; align-items: center; border: 1px solid #d9d9d9; margin: 0 12px 0 1px; padding-left: 2px; gap: 9px; color: #777; }
.crumbs a { color: #111; }
.hist { margin-left: auto; width: 20px; }
.redo { width: 40px; align-self: stretch; border-left: 1px solid #d9d9d9; }
.ex-search { width: 253px; height: 39px; display: flex; align-items: center; border: 1px solid #d9d9d9; padding: 0 10px 0 17px; gap: 17px; }
.ex-search input { border: 0; padding: 0; flex: 1; min-width: 0; background: none; }
.ex-search input::placeholder { color: #6d6d6d; opacity: 1; }
.ex-body { flex: 1; min-height: 0; display: flex; }
.tree { width: 196px; overflow: hidden; padding: 21px 0 0 1px; }
.tree a { display: flex; align-items: center; height: 30px; padding: 0 4px 0 41px; gap: 6px; white-space: nowrap; }
.tree .top { padding-left: 30px; gap: 5px; }
.tree a + .top { margin-top: 10px; }
.tree .pin { margin-left: auto; }
.tree .selected { background: #d9d9d9; }
.tree-scroll { width: 20px; margin: 0 2px 0 1px; background: #f0f0f0; display: flex; flex-direction: column; align-items: center; padding: 5px 0; color: #555; }
.tree-scroll i { width: 20px; height: 333px; background: #cdcdcd; margin: 4px 0 auto; }
.files { flex: 1; min-width: 0; border-left: 1px solid #f0f0f0; }
table { width: 100%; table-layout: fixed; border-collapse: collapse; }
.c-name { width: 341px; } .c-date { width: 180px; } .c-type { width: 150px; } .c-size { width: 100px; }
th { height: 34px; padding: 0 8px; text-align: left; font-weight: 400; color: #4c607a; border-right: 1px solid #e5e5e5; position: relative; }
th:first-child { padding-left: 23px; }
.sort { position: absolute; left: 50%; top: -1px; width: 10px; height: 10px; color: #777; }
tbody::before { content: ""; display: block; height: 7px; }
tbody td { height: 27px; padding: 0 8px; color: #6d6d6d; white-space: nowrap; }
tbody td:first-child { color: #111; padding-left: 25px; display: flex; align-items: center; gap: 5px; }
tbody td:nth-child(4) { text-align: right; }
.ex-status { display: flex; align-items: center; height: 30px; padding: 0 6px 0 18px; color: #1e395b; }
.ex-status span { margin-right: auto; }
.view { width: 28px; height: 29px; }
.view.on { background: #cce8f7; border: 1px solid #26a0da; }

/* Taskbar */
.taskbar { height: 50px; display: flex; background: linear-gradient(90deg, #22363f, #20333f 60%, #1b2a44 82%, #1b2942); color: #fff; }
.launch { display: flex; }
.launch button { width: 60px; }
.running { display: flex; margin-left: 2px; }
.running button { width: 62px; position: relative; }
.open::after { content: ""; position: absolute; left: 6px; right: 6px; bottom: 0; height: 3px; background: #76b9ed; }
.running .front { background: #4d5e67; border-right: 4px solid #3d4c55; padding-left: 4px; }
.running .front::after { left: 0; right: -4px; }
.badge { position: absolute; left: 28px; top: 22px; width: 20px; height: 20px; border-radius: 50%; background: #f00; font-size: 14px; }
.tray { display: flex; align-items: center; margin-left: auto; }
.sun { width: 24px; height: 24px; border-radius: 50%; background: linear-gradient(135deg, #ffec70 20%, #ff9a00 80%); margin-right: 13px; }
.weather { font-size: 17px; margin-right: 14px; }
.icons { display: flex; align-items: center; gap: 12px; margin-left: 6px; }
.clock { display: flex; flex-direction: column; align-items: center; line-height: 23px; margin: 0 24px 0 13px; }
.notes { padding-right: 25px; border-right: 1px solid #7c8795; align-self: stretch; margin-right: 5px; }
```
